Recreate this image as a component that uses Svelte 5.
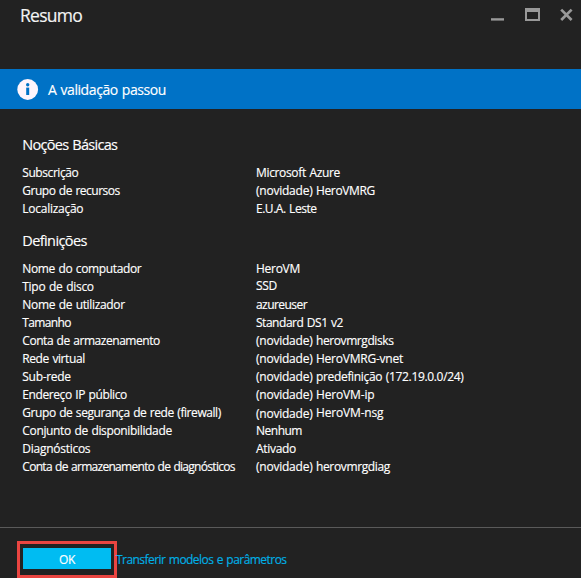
<script>
  const sections = [
    {
      title: 'Noções Básicas',
      width: 95,
      rows: [
        { label: 'Subscrição', lw: 56, value: 'Microsoft Azure', vw: 84 },
        { label: 'Grupo de recursos', lw: 97.5, tag: true, value: 'HeroVMRG', vw: 59 },
        { label: 'Localização', lw: 61, value: 'E.U.A. Leste', vw: 60.5 }
      ]
    },
    {
      title: 'Definições',
      width: 64.5,
      rows: [
        { label: 'Nome do computador', lw: 119, value: 'HeroVM', vw: 44 },
        { label: 'Tipo de disco', lw: 71.5, value: 'SSD', vw: 21, raised: true },
        { label: 'Nome de utilizador', lw: 102.5, value: 'azureuser', vw: 51 },
        { label: 'Tamanho', lw: 48.5, value: 'Standard DS1 v2', vw: 87 },
        { label: 'Conta de armazenamento', lw: 137.5, tag: true, value: 'herovmrgdisks', vw: 77.5 },
        { label: 'Rede virtual', lw: 62.5, tag: true, value: 'HeroVMRG-vnet', vw: 87 },
        { label: 'Sub-rede', lw: 48.5, tag: true, value: 'predefinição (172.19.0.0/24)', vw: 147.5 },
        { label: 'Endereço IP público', lw: 104.5, tag: true, value: 'HeroVM-ip', vw: 58.5 },
        { label: 'Grupo de segurança de rede (firewall)', lw: 198.5, tag: true, lowTag: true, value: 'HeroVM-nsg', vw: 67.5 },
        { label: 'Conjunto de disponibilidade', lw: 149.5, value: 'Nenhum', vw: 46 },
        { label: 'Diagnósticos', lw: 68, value: 'Ativado', vw: 40 },
        { label: 'Conta de armazenamento de diagnósticos', lw: 212.5, tag: true, value: 'herovmrgdiag', vw: 74 }
      ]
    }
  ];

  function fit(node, width) {
    const natural = node.getBoundingClientRect().width;
    node.style.letterSpacing = `${(width - natural) / node.textContent.length}px`;
  }
</script>

<main>
  <header>
    <h1><span use:fit={62}>Resumo</span></h1>
    <svg class="controls" width="84" height="16" viewBox="0 0 84 16" fill="none" stroke="#999">
      <path d="M0 12.4h13" stroke-width="2.4" />
      <path d="M35 3v10h13V3" stroke-width="2" />
      <path d="M34 3h15" stroke-width="4" />
      <path d="M70.2 2.6l10.4 10.4M80.6 2.6L70.2 13" stroke-width="2.7" />
    </svg>
  </header>

  <div class="banner">
    <svg width="22" height="22" viewBox="0 0 22 22">
      <circle cx="10.7" cy="11.5" r="10.4" fill="#fff5fc" />
      <circle cx="10.7" cy="6.8" r="1.7" fill="#0072c6" />
      <path d="M9.2 9.6h3v7.4h-3z" fill="#0072c6" />
    </svg>
    <p><span use:fit={118}>A validação passou</span></p>
  </div>

  <div class="content">
    {#each sections as section}
      <section>
        <h2><span use:fit={section.width}>{section.title}</span></h2>
        <dl>
          {#each section.rows as row}
            <div class="row">
              <dt><span use:fit={row.lw}>{row.label}</span></dt>
              <dd class:raised={row.raised}>
                {#if row.tag}<span class="tag" class:low={row.lowTag}><span use:fit={56.5}>(novidade)</span></span>{/if}<span use:fit={row.vw}>{row.value}</span>
              </dd>
            </div>
          {/each}
        </dl>
      </section>
    {/each}
  </div>

  <footer>
    <div class="frame"><button><span use:fit={16}>OK</span></button></div>
    <a href="#modelos"><span use:fit={170.5}>Transferir modelos e parâmetros</span></a>
  </footer>
</main>

<style>
  :global(body) {
    background: #222;
  }
  main {
    box-sizing: border-box;
    width: 581px;
    height: 578px;
    overflow: hidden;
    display: flex;
    flex-direction: column;
    background: #222;
    color: #fff;
    font: 12px/18px "Open Sans", "Noto Sans", sans-serif;
    word-spacing: 0.8px;
    -webkit-text-stroke: 0.15px currentColor;
    white-space: nowrap;
  }
  h1, h2, p, dl, dt, dd {
    margin: 0;
    font-weight: 400;
  }
  span {
    display: inline-block;
  }
  header {
    flex: none;
    height: 69px;
    display: flex;
    justify-content: space-between;
    align-items: flex-start;
    padding: 3px 6px 0 20px;
    box-sizing: border-box;
  }
  h1 {
    font-size: 17.5px;
    line-height: 24px;
    color: #f4f4f4;
  }
  .controls {
    margin-top: 4px;
  }
  .banner {
    flex: none;
    height: 40px;
    display: flex;
    align-items: center;
    gap: 9px;
    padding-left: 17px;
    background: #0072c6;
  }
  .banner p {
    padding-top: 2px;
    font-size: 14px;
    line-height: 22px;
  }
  .content {
    flex: 1;
    padding: 26px 0 0 22.3px;
  }
  h2 {
    font-size: 14.5px;
    line-height: 20px;
    margin-bottom: 9px;
  }
  section + section {
    margin-top: 13px;
  }
  .row {
    display: flex;
    height: 18px;
  }
  dt {
    width: 233.7px;
    flex: none;
  }
  dd {
    display: flex;
  }
  .raised {
    margin-top: -1px;
  }
  .tag {
    width: 60px;
  }
  .low {
    padding-top: 1px;
  }
  footer {
    flex: none;
    box-sizing: border-box;
    height: 51px;
    border-top: 1px solid #5a5a5a;
    display: flex;
    align-items: flex-start;
    padding: 13px 0 0 17px;
  }
  .frame {
    box-sizing: border-box;
    width: 100px;
    height: 37px;
    border: 3px solid #ea4541;
    padding: 4px 3px;
  }
  button {
    display: block;
    width: 88px;
    height: 21px;
    border: 0;
    padding: 2px 0 0;
    background: #00bcf2;
    color: #fff;
    font: 12px/19px "Open Sans", "Noto Sans", sans-serif;
  }
  a {
    margin: 10px 0 0 -1px;
    color: #00b0e6;
    text-decoration: none;
  }
</style>
